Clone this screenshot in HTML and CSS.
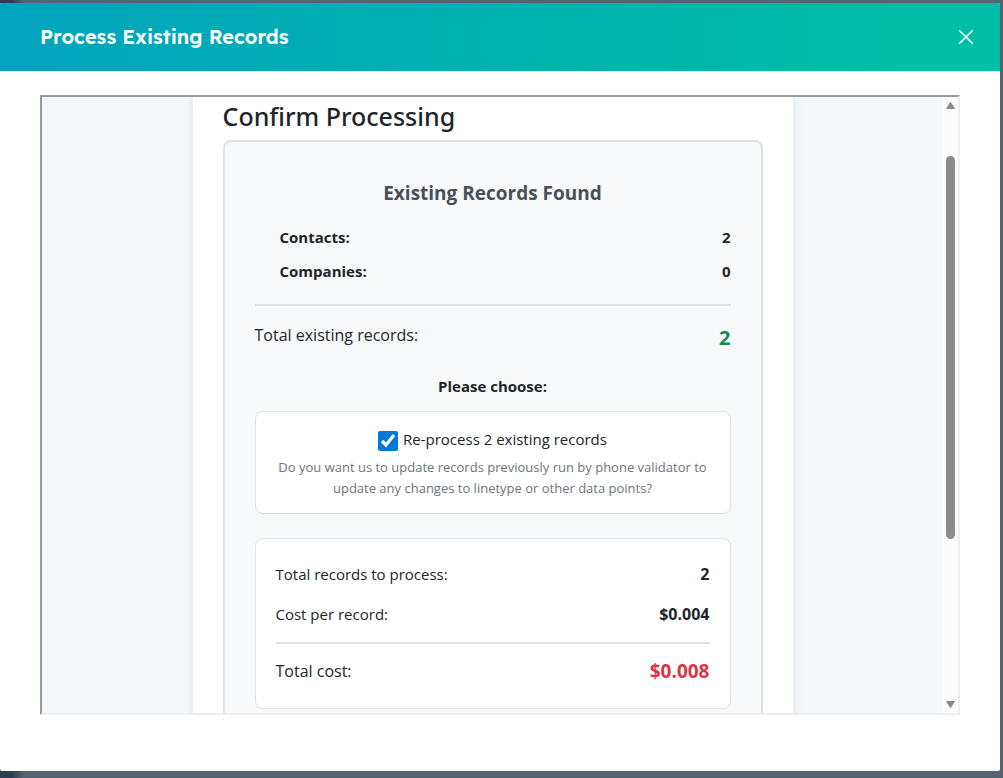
FILE: index.html
```html
<!DOCTYPE html>
<html lang="en">
<head>
    <meta charset="UTF-8">
    <meta name="viewport" content="width=device-width, initial-scale=1.0">
    <title>Process Existing Records</title>
    <link rel="stylesheet" href="styles.css">
</head>
<body>
    <div class="modal" role="dialog" aria-labelledby="modalTitle">
        <header class="modal-header">
            <h1 id="modalTitle">Process Existing Records</h1>
            <button type="button" class="close" aria-label="Close">
                <svg width="16" height="16" viewBox="0 0 16 16" fill="none" stroke="currentColor" stroke-width="1.6">
                    <path d="M1.2 1.2l13.6 13.6M14.8 1.2L1.2 14.8"/>
                </svg>
            </button>
        </header>
        <div class="modal-body">
            <div class="frame">
                <main class="content">
                    <div class="card">
                        <h2>Confirm Processing</h2>
                        <section class="panel">
                            <h3>Existing Records Found</h3>
                            <div class="counts">
                                <div class="row"><span>Contacts:</span><span>2</span></div>
                                <div class="row"><span>Companies:</span><span>0</span></div>
                            </div>
                            <div class="row total">
                                <span>Total existing records:</span>
                                <strong class="green">2</strong>
                            </div>
                            <p class="choose">Please choose:</p>
                            <div class="box option">
                                <div class="check">
                                    <input type="checkbox" id="reprocess" checked>
                                    <label for="reprocess">Re-process 2 existing records</label>
                                </div>
                                <p class="hint">Do you want us to update records previously run by phone validator to update any changes to linetype or other data points?</p>
                            </div>
                            <div class="box cost">
                                <div class="row"><span>Total records to process:</span><strong>2</strong></div>
                                <div class="row"><span>Cost per record:</span><strong>$0.004</strong></div>
                                <div class="row cost-total"><span>Total cost:</span><strong class="red">$0.008</strong></div>
                            </div>
                        </section>
                    </div>
                </main>
                <div class="scrollbar" aria-hidden="true">
                    <svg width="9" height="7" viewBox="0 0 9 7"><path d="M4.5 0.5L8.5 6.5H0.5z" fill="#8b8b8b" stroke="#8b8b8b" stroke-linejoin="round"/></svg>
                    <div class="track">
                        <div class="thumb"></div>
                    </div>
                    <svg width="9" height="7" viewBox="0 0 9 7"><path d="M4.5 6.5L8.5 0.5H0.5z" fill="#8b8b8b" stroke="#8b8b8b" stroke-linejoin="round"/></svg>
                </div>
            </div>
        </div>
    </div>
</body>
</html>
```

FILE: styles.css
```css
* {
    box-sizing: border-box;
}
body {
    display: flex;
    height: 100vh;
    margin: 0;
    padding: 3px 3px 7px 0;
    font-family: "Segoe UI", "Open Sans", "Noto Sans", sans-serif;
    font-size: 15px;
    line-height: 24px;
    color: #212529;
    background: linear-gradient(90deg, #2d3e50 12px, #56646f 24px);
}
h1, h2, h3, p {
    margin: 0;
}
.modal {
    display: flex;
    flex: 1;
    flex-direction: column;
    min-width: 0;
    overflow: hidden;
    background: white;
    border-radius: 2px;
}
.modal-header {
    display: flex;
    align-items: center;
    justify-content: space-between;
    height: 68px;
    flex-shrink: 0;
    padding: 0 26px 0 40px;
    color: white;
    background: linear-gradient(90deg, #00a4bd, #00bda5 90%);
}
.modal-header h1 {
    font-family: Lexend, Inter, sans-serif;
    font-size: 20px;
    font-weight: 600;
}
.close {
    display: flex;
    padding: 0;
    border: none;
    color: white;
    background: none;
    cursor: pointer;
}
.modal-body {
    display: flex;
    flex: 1;
    min-height: 0;
    padding: 24px 40px 56px;
}
.frame {
    display: flex;
    flex: 1;
    min-width: 0;
    border: 2px solid;
    border-color: #9a9a9a #eee #eee #9a9a9a;
}
.content {
    flex: 1;
    min-width: 0;
    overflow: hidden;
    background: #f4f8fb;
}
.card {
    max-width: 600px;
    margin: 0 auto;
    padding: 3px 30px 30px;
    background: white;
    box-shadow: 0 0 10px rgba(0,0,0,0.1);
}
.card h2 {
    margin-bottom: 8px;
    font-family: "Segoe UI", "Noto Sans", sans-serif;
    font-size: 25px;
    font-weight: 500;
    line-height: 32px;
}
.panel {
    padding: 39px 30px 30px;
    border: 2px solid #dee2e6;
    border-radius: 8px;
    background: #f8f9fa;
}
.panel h3 {
    margin-bottom: 15px;
    font-size: 19px;
    font-weight: 700;
    text-align: center;
    color: #495057;
}
.row {
    display: flex;
    justify-content: space-between;
}
.counts {
    padding-bottom: 16px;
    border-bottom: 2px solid #dee2e6;
    font-weight: 700;
}
.counts .row {
    padding: 5px 0 5px 25px;
}
.total {
    padding: 17px 0 24px;
    font-size: 16px;
}
.green {
    padding-top: 3px;
    font-size: 20px;
    color: #198754;
}
.choose {
    margin-bottom: 13px;
    font-weight: 700;
    text-align: center;
}
.box {
    border: 1px solid #dee2e6;
    border-radius: 8px;
    background: white;
}
.option {
    margin-bottom: 24px;
    padding: 15px 15px 14px;
    text-align: center;
}
.check {
    display: flex;
    align-items: center;
    justify-content: center;
    gap: 5px;
    margin-bottom: 6px;
}
.check input {
    width: 20px;
    height: 20px;
    margin: 3px 0 0;
    accent-color: #0078d7;
}
.hint {
    font-size: 13px;
    line-height: 21px;
    color: #6c757d;
}
.cost {
    padding: 15px 20px 16px;
}
.cost .row {
    padding: 8px 0;
}
.cost .row strong {
    font-size: 16px;
}
.cost .cost-total {
    margin-top: 8px;
    padding: 15px 0 9px;
    border-top: 2px solid #dee2e6;
    font-size: 16px;
}
.cost .row .red {
    font-size: 19px;
    color: #dc3545;
}
.scrollbar {
    display: flex;
    flex-direction: column;
    align-items: center;
    width: 15px;
    padding: 5px 0;
    background: #fcfcfc;
}
.track {
    display: flex;
    flex: 1;
    flex-direction: column;
    padding: 47px 0 162px;
}
.thumb {
    flex: 1;
    width: 9px;
    border-radius: 5px;
    background: #8b8b8b;
}
```
